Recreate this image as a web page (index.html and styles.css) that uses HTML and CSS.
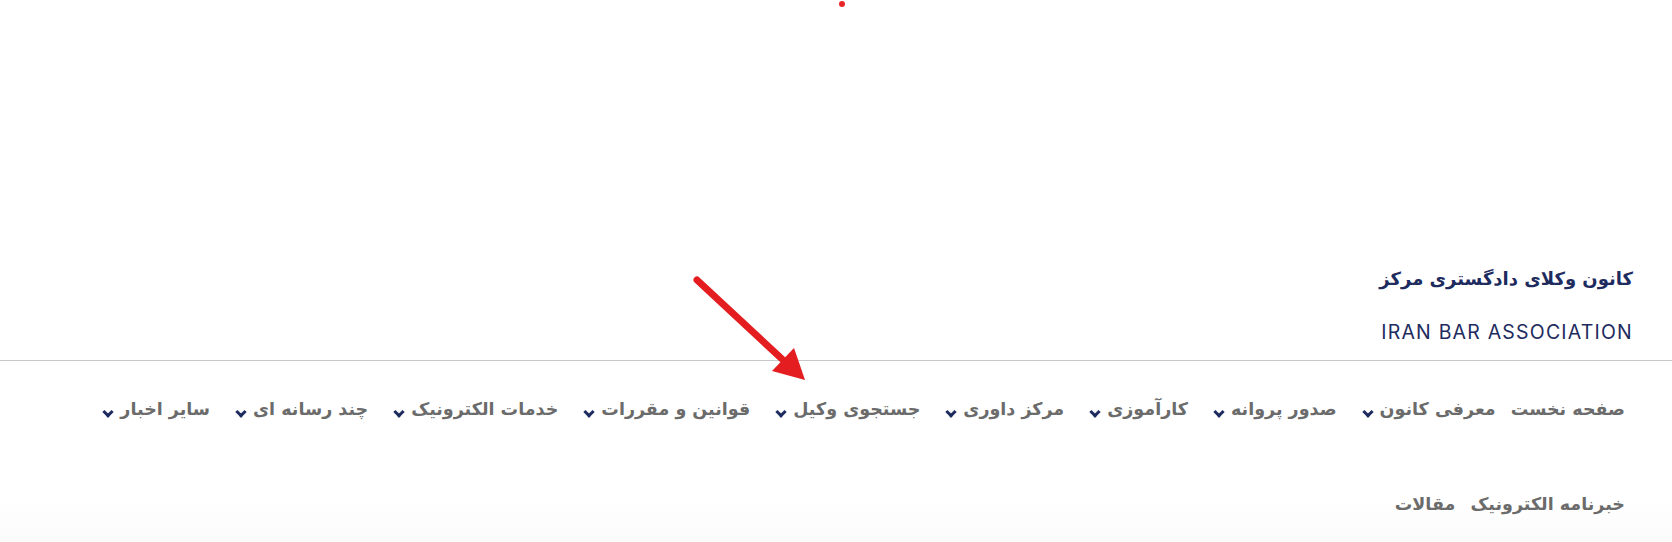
FILE: index.html
```
<!DOCTYPE html>
<html lang="fa" dir="rtl">
<head>
    <meta charset="UTF-8">
    <meta name="viewport" content="width=device-width, initial-scale=1.0">
    <title>کانون وکلای دادگستری مرکز</title>
    <link rel="stylesheet" href="styles.css">
</head>
<body>

<span class="loader-dot"></span>

<header class="site-header">
    <div class="brand">
        <h1 class="brand-title">کانون وکلای دادگستری مرکز</h1>
        <p class="brand-latin" dir="ltr">IRAN BAR ASSOCIATION</p>
    </div>
</header>

<nav class="main-nav">
    <ul class="menu">
        <li class="menu-item"><a href="#">صفحه نخست</a></li>
        <li class="menu-item has-sub"><a href="#">معرفی کانون</a></li>
        <li class="menu-item has-sub"><a href="#">صدور پروانه</a></li>
        <li class="menu-item has-sub"><a href="#">کارآموزی</a></li>
        <li class="menu-item has-sub"><a href="#">مرکز داوری</a></li>
        <li class="menu-item has-sub"><a href="#">جستجوی وکیل</a></li>
        <li class="menu-item has-sub"><a href="#">قوانین و مقررات</a></li>
        <li class="menu-item has-sub"><a href="#">خدمات الکترونیک</a></li>
        <li class="menu-item has-sub"><a href="#">چند رسانه ای</a></li>
        <li class="menu-item has-sub"><a href="#">سایر اخبار</a></li>
        <li class="menu-item"><a href="#">خبرنامه الکترونیک</a></li>
        <li class="menu-item"><a href="#">مقالات</a></li>
    </ul>
</nav>

<!-- annotation arrow pointing at the lawyer search item -->
<svg class="pointer-arrow" width="125" height="120" viewBox="0 0 125 120">
    <line x1="7" y1="10" x2="92" y2="89" stroke="#e41e20" stroke-width="7" stroke-linecap="round"/>
    <polygon points="115,110 82,101 104,78" fill="#e41e20"/>
</svg>

</body>
</html>
```

FILE: styles.css
```
body {
    margin: 0;
    padding: 0;
    min-height: 542px;
    font-family: "DejaVu Sans", sans-serif;
    background: linear-gradient(to bottom, #ffffff 500px, #fbfbfb 542px);
    color: #6b6b6b;
}
.loader-dot {
    position: absolute;
    left: 839px;
    top: 1px;
    width: 6px;
    height: 6px;
    border-radius: 50%;
    background-color: #e8262a;
}
.site-header {
    padding: 264px 39px 13px;
    border-bottom: 1px solid #c8c8c8;
}
.brand {
    display: flex;
    flex-direction: column;
    align-items: flex-start;
}
.brand-title {
    margin: 0;
    font-size: 18px;
    line-height: 30px;
    font-weight: bold;
    color: #1d2b5e;
}
.brand-latin {
    margin: 23px 0 0;
    font-family: "Inter", sans-serif;
    font-size: 19.5px;
    letter-spacing: 1.2px;
    line-height: 30px;
    color: #1d2b5e;
}
.main-nav {
    padding: 0 47px 0 60px;
}
.menu {
    display: flex;
    flex-wrap: wrap;
    gap: 0 15px;
    list-style: none;
    margin: 0;
    padding: 0;
}
.menu-item {
    display: flex;
    align-items: center;
    height: 95px;
}
.menu-item a {
    font-size: 17.5px;
    font-weight: bold;
    color: #6b6b6b;
    text-decoration: none;
}
.has-sub::after {
    content: "";
    width: 5px;
    height: 5px;
    margin: 6px 8px 0 12px;
    border-right: 3px solid #1d2b5e;
    border-bottom: 3px solid #1d2b5e;
    transform: rotate(45deg);
}
.pointer-arrow {
    position: absolute;
    left: 690px;
    top: 270px;
}
```
